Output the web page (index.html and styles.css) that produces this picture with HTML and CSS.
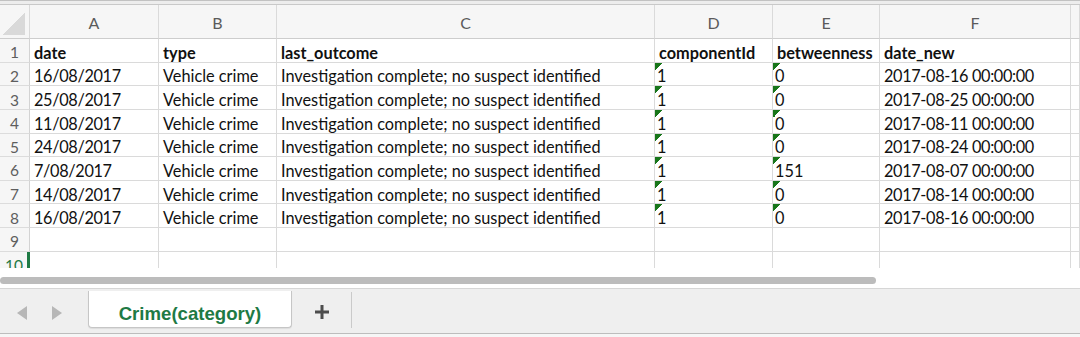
FILE: index.html
```html
<!DOCTYPE html>
<html>
<head>
<meta charset="utf-8">
<link rel="stylesheet" href="styles.css">
</head>
<body>
<div class="app">
  <div class="topbar"></div>
  <div class="grid">
    <div class="ch corner"><span class="tri"></span></div>
    <div class="ch">A</div><div class="ch">B</div><div class="ch">C</div><div class="ch">D</div><div class="ch">E</div><div class="ch">F</div><div class="ch last"></div>

    <div class="rh">1</div><div class="c b">date</div><div class="c b">type</div><div class="c b">last_outcome</div><div class="c b">componentId</div><div class="c b">betweenness</div><div class="c b">date_new</div><div class="c"></div>

    <div class="rh">2</div><div class="c n">16/08/2017</div><div class="c">Vehicle crime</div><div class="c">Investigation complete; no suspect identified</div><div class="c t">1</div><div class="c t">0</div><div class="c n">2017-08-16 00:00:00</div><div class="c"></div>

    <div class="rh">3</div><div class="c n">25/08/2017</div><div class="c">Vehicle crime</div><div class="c">Investigation complete; no suspect identified</div><div class="c t">1</div><div class="c t">0</div><div class="c n">2017-08-25 00:00:00</div><div class="c"></div>

    <div class="rh">4</div><div class="c n">11/08/2017</div><div class="c">Vehicle crime</div><div class="c">Investigation complete; no suspect identified</div><div class="c t">1</div><div class="c t">0</div><div class="c n">2017-08-11 00:00:00</div><div class="c"></div>

    <div class="rh">5</div><div class="c n">24/08/2017</div><div class="c">Vehicle crime</div><div class="c">Investigation complete; no suspect identified</div><div class="c t">1</div><div class="c t">0</div><div class="c n">2017-08-24 00:00:00</div><div class="c"></div>

    <div class="rh">6</div><div class="c n">7/08/2017</div><div class="c">Vehicle crime</div><div class="c">Investigation complete; no suspect identified</div><div class="c t">1</div><div class="c t">151</div><div class="c n">2017-08-07 00:00:00</div><div class="c"></div>

    <div class="rh">7</div><div class="c n">14/08/2017</div><div class="c">Vehicle crime</div><div class="c">Investigation complete; no suspect identified</div><div class="c t">1</div><div class="c t">0</div><div class="c n">2017-08-14 00:00:00</div><div class="c"></div>

    <div class="rh">8</div><div class="c n">16/08/2017</div><div class="c">Vehicle crime</div><div class="c">Investigation complete; no suspect identified</div><div class="c t">1</div><div class="c t">0</div><div class="c n">2017-08-16 00:00:00</div><div class="c"></div>

    <div class="rh">9</div><div class="c"></div><div class="c"></div><div class="c"></div><div class="c"></div><div class="c"></div><div class="c"></div><div class="c"></div>

    <div class="rh sel">10</div><div class="c"></div><div class="c"></div><div class="c"></div><div class="c"></div><div class="c"></div><div class="c"></div><div class="c"></div>
  </div>
  <div class="scroll"><div class="thumb"></div></div>
  <div class="tabbar">
    <div class="nav">
      <svg width="12" height="16" viewBox="0 0 12 16"><polygon points="11,1 11,15 1,8" fill="#b7b7b7"/></svg>
      <svg width="12" height="16" viewBox="0 0 12 16"><polygon points="1,1 1,15 11,8" fill="#b7b7b7"/></svg>
    </div>
    <div class="tab">Crime(category)</div>
    <div class="add">
      <svg width="16" height="16" viewBox="0 0 16 16"><path d="M8 1V15M1 8H15" stroke="#4d4d4d" stroke-width="3"/></svg>
    </div>
  </div>
  <div class="foot"></div>
</div>
</body>
</html>
```
FILE: styles.css
```css
html, body {
  margin: 0;
  padding: 0;
  background: #ffffff;
}
.app {
  width: 1080px;
  height: 337px;
  overflow: hidden;
  display: flex;
  flex-direction: column;
  font-family: "Lato", "Open Sans", sans-serif;
}
.topbar {
  height: 3px;
  flex: none;
  background: #ededed;
  border-top: 1px solid #c2c2c2;
  border-bottom: 1px solid #c9c9c9;
}
.grid {
  flex: none;
  height: 263px;
  overflow: hidden;
  display: grid;
  grid-template-columns: 30px 129px 118px 378px 118px 107px 191px 1fr;
  grid-template-rows: 34px repeat(9, 23.625px) 24px;
}
.ch {
  background: #f6f6f6;
  border-right: 1px solid #dadada;
  border-bottom: 1px solid #cdcdcd;
  color: #5b5b5b;
  font-size: 16px;
  display: flex;
  align-items: center;
  justify-content: center;
  box-sizing: border-box;
  padding-top: 2px;
}
.corner {
  align-items: flex-end;
  justify-content: flex-start;
  padding: 0 0 3px 3px;
}
.tri {
  display: block;
  width: 22px;
  height: 22px;
  background: linear-gradient(to bottom right, transparent 50%, #d9d9d9 50%);
}
.rh {
  background: #f6f6f6;
  border-right: 1px solid #d3d3d3;
  border-bottom: 1px solid #dcdcdc;
  color: #5e5e5e;
  font-size: 15.5px;
  display: flex;
  align-items: center;
  justify-content: center;
  box-sizing: border-box;
  padding-top: 4px;
}
.rh.sel {
  color: #1e7a44;
  border-right: 3px solid #1e7a44;
  padding-left: 1px;
}
.c {
  position: relative;
  border-right: 1px solid #dadada;
  border-bottom: 1px solid #dadada;
  box-sizing: border-box;
  font-size: 16.3px;
  color: #111111;
  white-space: nowrap;
  overflow: hidden;
  padding: 4px 0 0 4px;
  display: flex;
  align-items: center;
}
.c.b {
  font-weight: 700;
}
.c.n {
  letter-spacing: -0.35px;
}
.c.t {
  padding-left: 2px;
}
.c.t::before {
  content: "";
  position: absolute;
  left: 0;
  top: 0;
  width: 8px;
  height: 8px;
  background: linear-gradient(to bottom right, #18761a 50%, transparent 50%);
}
.scroll {
  flex: none;
  height: 21px;
  box-sizing: border-box;
  border-bottom: 1px solid #d6d6d6;
  padding-top: 9px;
  background: #ffffff;
}
.thumb {
  width: 876px;
  height: 7px;
  border-radius: 4px;
  background: #bcbcbc;
}
.tabbar {
  flex: none;
  height: 45px;
  box-sizing: border-box;
  background: #efefef;
  border-bottom: 1px solid #bdbdbd;
  display: flex;
  align-items: flex-start;
}
.nav {
  width: 88px;
  height: 40px;
  display: flex;
  align-items: center;
  justify-content: center;
  gap: 23px;
  padding-right: 10px;
  box-sizing: border-box;
  margin-top: 4px;
}
.tab {
  width: 204px;
  height: 37px;
  margin-top: 2px;
  box-sizing: border-box;
  background: #ffffff;
  border: 1px solid #c6c6c6;
  border-top: none;
  border-radius: 0 0 4px 4px;
  box-shadow: 0 1px 1px rgba(0,0,0,0.08);
  color: #1e7a44;
  font-family: "Liberation Sans", Arial, sans-serif;
  font-weight: 700;
  font-size: 18.6px;
  display: flex;
  align-items: center;
  justify-content: center;
  padding-top: 10px;
}
.add {
  width: 60px;
  height: 36px;
  margin-top: 3px;
  box-sizing: border-box;
  border-right: 1px solid #cacaca;
  display: flex;
  align-items: center;
  justify-content: center;
  padding-top: 3px;
}
.foot {
  flex: 1;
  background: #f6f6f6;
}
```
